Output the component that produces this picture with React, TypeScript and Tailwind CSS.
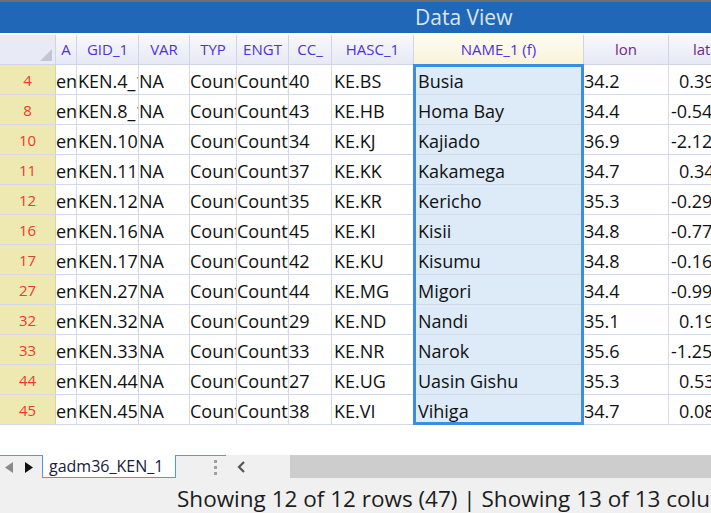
import React from 'react';

const cols = [
  { key: 'a', label: 'A', w: 'w-[21px]' },
  { key: 'gid', label: 'GID_1', w: 'w-[62px]' },
  { key: 'var', label: 'VAR', w: 'w-[51px]' },
  { key: 'typ', label: 'TYP', w: 'w-[47px]' },
  { key: 'engt', label: 'ENGT', w: 'w-[52px]' },
  { key: 'cc', label: 'CC_', w: 'w-[43px]' },
  { key: 'hasc', label: 'HASC_1', w: 'w-[82px]' },
  { key: 'name', label: 'NAME_1 (f)', w: 'w-[170px]' },
  { key: 'lon', label: 'lon', w: 'w-[85px]' },
  { key: 'lat', label: 'lat', w: 'w-[90px]' },
];

const rows = [
  ['4', 'KEN.4_1', '40', 'KE.BS', 'Busia', '34.2', '0.391'],
  ['8', 'KEN.8_1', '43', 'KE.HB', 'Homa Bay', '34.4', '-0.543'],
  ['10', 'KEN.10_1', '34', 'KE.KJ', 'Kajiado', '36.9', '-2.125'],
  ['11', 'KEN.11_1', '37', 'KE.KK', 'Kakamega', '34.7', '0.345'],
  ['12', 'KEN.12_1', '35', 'KE.KR', 'Kericho', '35.3', '-0.295'],
  ['16', 'KEN.16_1', '45', 'KE.KI', 'Kisii', '34.8', '-0.771'],
  ['17', 'KEN.17_1', '42', 'KE.KU', 'Kisumu', '34.8', '-0.164'],
  ['27', 'KEN.27_1', '44', 'KE.MG', 'Migori', '34.4', '-0.992'],
  ['32', 'KEN.32_1', '29', 'KE.ND', 'Nandi', '35.1', '0.197'],
  ['33', 'KEN.33_1', '33', 'KE.NR', 'Narok', '35.6', '-1.258'],
  ['44', 'KEN.44_1', '27', 'KE.UG', 'Uasin Gishu', '35.3', '0.532'],
  ['45', 'KEN.45_1', '38', 'KE.VI', 'Vihiga', '34.7', '0.083'],
];

function Cell({ w, children, className = '' }: { w: string; children: React.ReactNode; className?: string }) {
  return (
    <div className={`${w} shrink-0 h-full overflow-hidden whitespace-nowrap border-r border-[#d3d9e8] flex items-center pt-[4px] text-[18px] text-[#111] ${className}`}>
      {children}
    </div>
  );
}

export default function App() {
  return (
    <div className="w-[711px] h-[513px] overflow-hidden bg-white flex flex-col font-['Open_Sans',sans-serif]">
      <div className="h-[2px] bg-[#6f6f6f] shrink-0" />
      <div className="h-[31px] bg-[#2167b8] shrink-0 flex items-center pl-[415px] text-[21px] text-[#dbe6f4] leading-none">
        Data View
      </div>
      <div className="h-[2px] bg-white shrink-0" />

      {/* header */}
      <div className="h-[30px] shrink-0 flex bg-gradient-to-b from-[#f8f9fd] to-[#e6e9f5] border-b border-[#cfd5e6]">
        <div className="w-[56px] shrink-0 h-full relative bg-[#e8eaf6] border-r border-[#cfd5e6]">
          <svg className="absolute right-[3px] bottom-[3px]" width="12" height="12" viewBox="0 0 12 12">
            <polygon points="12,0 12,12 0,12" fill="#c4c6cf" />
          </svg>
        </div>
        {cols.map((c) => (
          <div
            key={c.key}
            className={`${c.w} shrink-0 h-full overflow-hidden whitespace-nowrap border-r border-[#cfd5e6] flex items-center justify-center text-[15px] ${
              c.key === 'lon' || c.key === 'lat' ? 'text-[#6e2a86]' : 'text-[#5030e0]'
            } ${c.key === 'name' ? 'bg-gradient-to-b from-[#fdfcf4] to-[#f8f3d8]' : ''} ${c.key === 'lat' ? 'justify-start pl-[24px]' : ''}`}
          >
            {c.label}
          </div>
        ))}
      </div>

      {/* body */}
      <div className="relative shrink-0">
        {rows.map((r) => (
          <div key={r[0]} className="h-[30px] flex border-b border-[#d3d9e8]">
            <div className="w-[56px] shrink-0 h-full bg-[#eee9b0] border-r border-[#d8d4a4] flex items-center justify-center pt-[1px] text-[15px] text-[#ec3b2c]">
              {r[0]}
            </div>
            <Cell w="w-[21px]">eng</Cell>
            <Cell w="w-[62px]" className="pl-[1px]">{r[1]}</Cell>
            <Cell w="w-[51px]">NA</Cell>
            <Cell w="w-[47px]">County</Cell>
            <Cell w="w-[52px]">County</Cell>
            <Cell w="w-[43px]">{r[2]}</Cell>
            <Cell w="w-[82px]" className="pl-[2px]">{r[3]}</Cell>
            <Cell w="w-[170px]" className="bg-[#ddeaf7] pl-[4px]">{r[4]}</Cell>
            <Cell w="w-[85px]">{r[5]}</Cell>
            <Cell w="w-[90px]" className={r[6].startsWith('-') ? 'pl-[2px]' : 'pl-[10px]'}>{r[6]}</Cell>
          </div>
        ))}
        {/* selected column outline */}
        <div className="absolute top-[-1px] bottom-[0px] left-[413px] w-[171px] border-[3px] border-[#3a8ddf] pointer-events-none" />
      </div>

      <div className="h-[30px] shrink-0 bg-white" />

      {/* sheet tabs + scrollbar */}
      <div className="h-[23px] shrink-0 flex items-stretch bg-[#f0f0f0]">
        <div className="w-[42px] shrink-0 border-t border-[#4a9be6] flex items-center gap-[12px] pl-[5px]">
          <svg width="8" height="11" viewBox="0 0 8 11"><polygon points="8,0 8,11 0,5.5" fill="#8a8a8a" /></svg>
          <svg width="8" height="11" viewBox="0 0 8 11"><polygon points="0,0 0,11 8,5.5" fill="#111" /></svg>
        </div>
        <div className="w-[134px] shrink-0 bg-white border-x border-b border-[#4a9be6] flex items-center pl-[6px] text-[16px] text-[#1a1a3a]">
          gadm36_KEN_1
        </div>
        <div className="w-[50px] shrink-0 border-t border-[#4a9be6] flex items-center pl-[38px]">
          <div className="flex flex-col gap-[3px]">
            <div className="w-[3px] h-[3px] bg-[#a0a0a0]" />
            <div className="w-[3px] h-[3px] bg-[#a0a0a0]" />
            <div className="w-[3px] h-[3px] bg-[#a0a0a0]" />
          </div>
        </div>
        <div className="w-[64px] shrink-0 flex items-center pl-[11px]">
          <svg width="9" height="12" viewBox="0 0 9 12"><polyline points="7,1 2,6 7,11" fill="none" stroke="#555" strokeWidth="2.2" /></svg>
        </div>
        <div className="flex-1 bg-[#cdcdcd]" />
      </div>

      {/* status bar */}
      <div className="flex-1 bg-[#f0f0f0] flex items-center pt-[6px] pl-[177px] whitespace-nowrap overflow-hidden text-[22.5px] text-[#1c1c1c]">
        Showing 12 of 12 rows (47) | Showing 13 of 13 columns
      </div>
    </div>
  );
}
